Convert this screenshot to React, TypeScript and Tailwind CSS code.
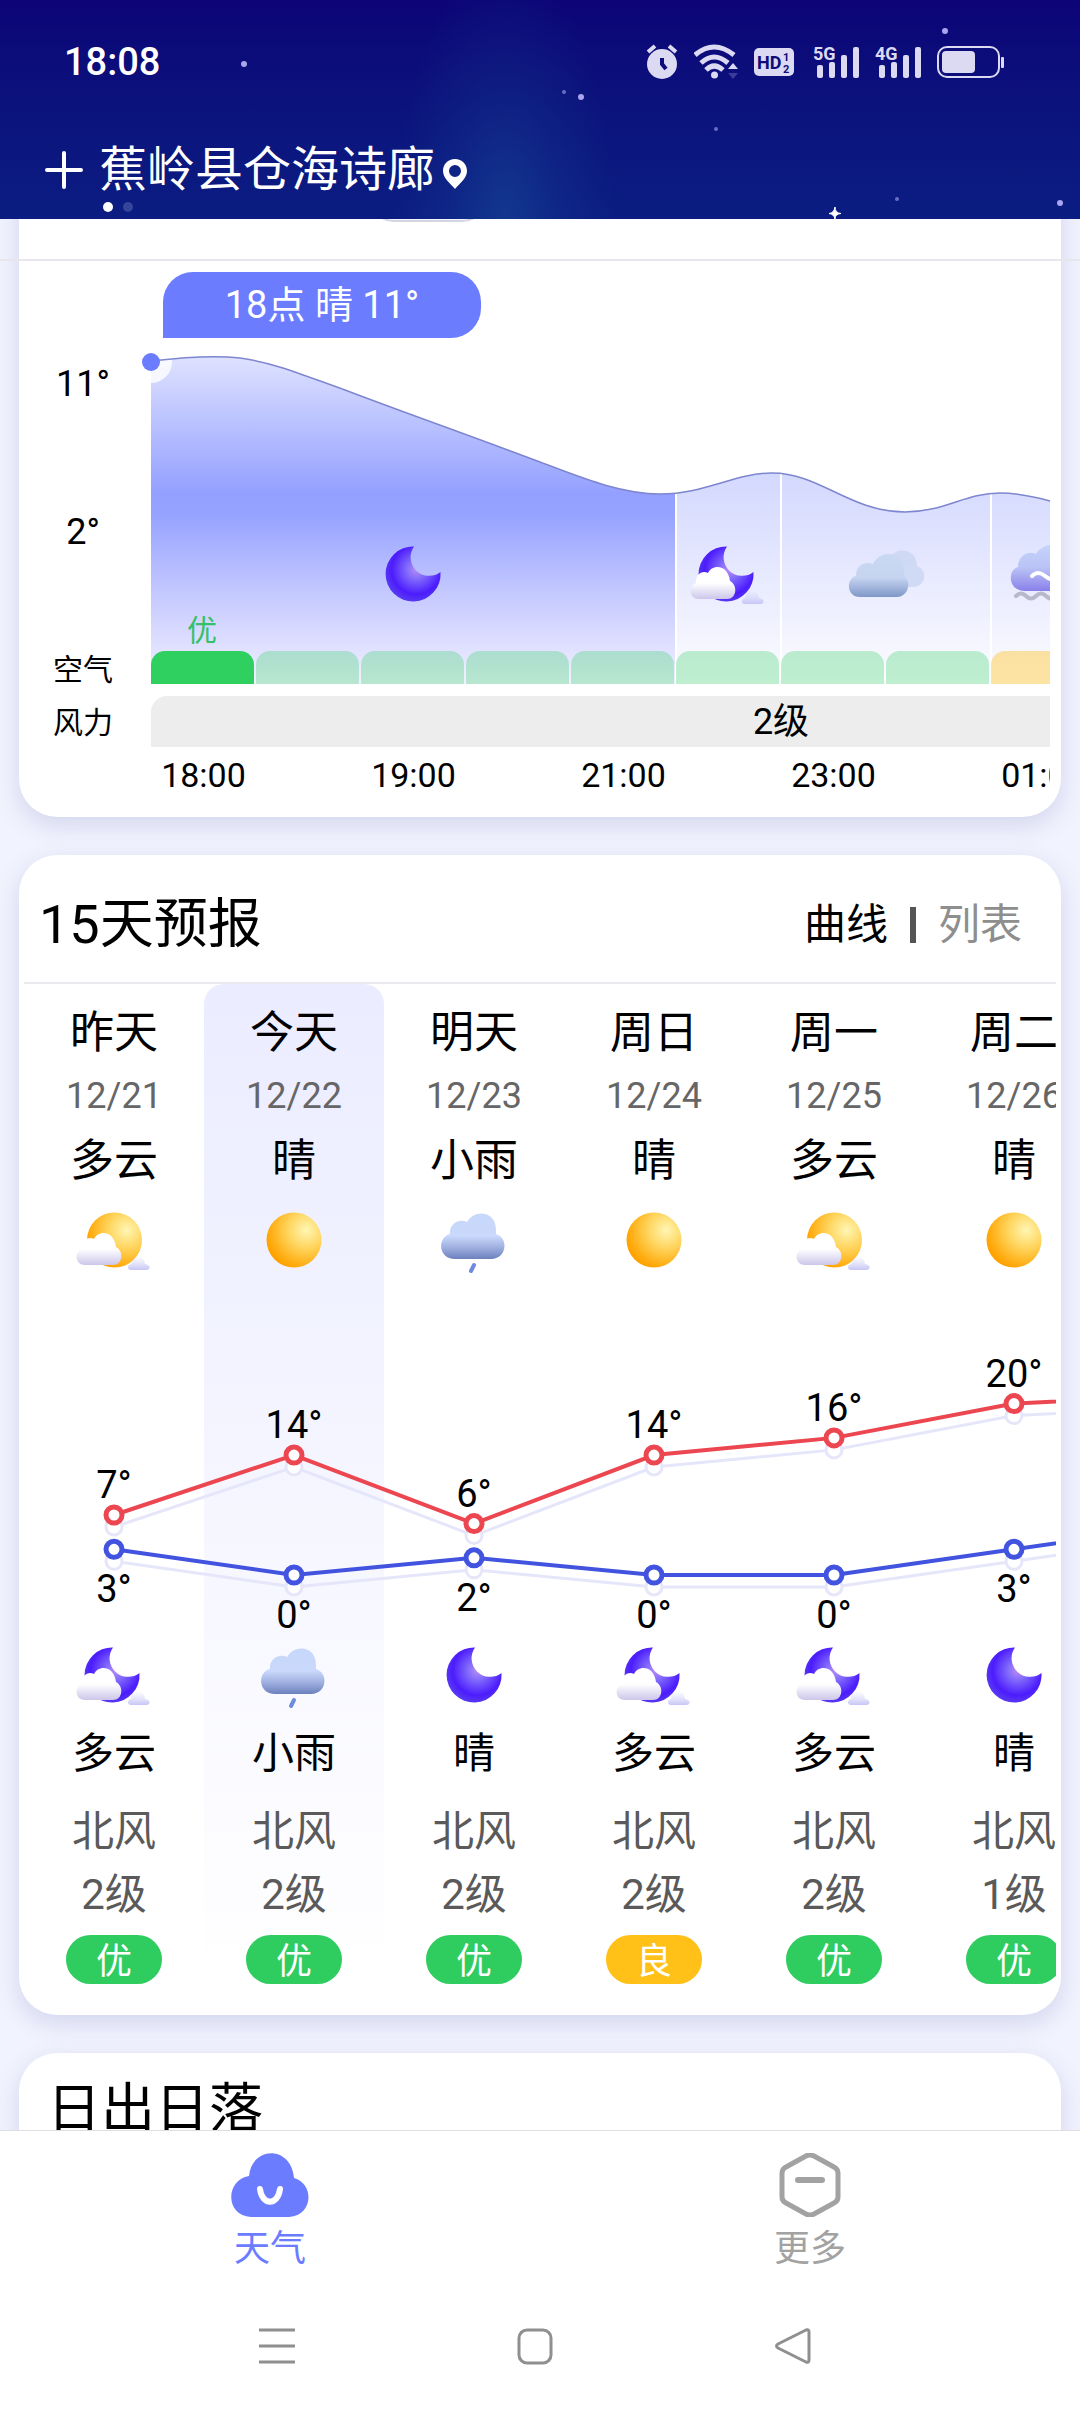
import { useState } from "react";

type IconName = "sun" | "sunCloud" | "moon" | "moonCloud" | "rain" | "cloudy" | "fog";

const days = [
  { name: "昨天", date: "12/21", day: "多云", dayIcon: "sunCloud", high: 7, low: 3, night: "多云", nightIcon: "moonCloud", wind: "北风", level: "2级", air: "优" },
  { name: "今天", date: "12/22", day: "晴", dayIcon: "sun", high: 14, low: 0, night: "小雨", nightIcon: "rain", wind: "北风", level: "2级", air: "优" },
  { name: "明天", date: "12/23", day: "小雨", dayIcon: "rain", high: 6, low: 2, night: "晴", nightIcon: "moon", wind: "北风", level: "2级", air: "优" },
  { name: "周日", date: "12/24", day: "晴", dayIcon: "sun", high: 14, low: 0, night: "多云", nightIcon: "moonCloud", wind: "北风", level: "2级", air: "良" },
  { name: "周一", date: "12/25", day: "多云", dayIcon: "sunCloud", high: 16, low: 0, night: "多云", nightIcon: "moonCloud", wind: "北风", level: "2级", air: "优" },
  { name: "周二", date: "12/26", day: "晴", dayIcon: "sun", high: 20, low: 3, night: "晴", nightIcon: "moon", wind: "北风", level: "1级", air: "优" },
];

// the lines run on towards the next, not yet scrolled-in day
const highs = [...days.map((d) => d.high), 21];
const lows = [...days.map((d) => d.low), 6];

const hours = ["18:00", "19:00", "21:00", "23:00", "01:00"];
const airBars = ["now", "good", "good", "good", "good", "good", "good", "good", "fair", "fair", "fair", "fair"];

const curve =
  "M0 23 C34 19 64 17 89 20 C124 25 149 36 194 52 C249 73 309 94 389 124 C429 139 469 156 509 156 C554 156 584 135 621 135 C669 135 699 174 754 174 C794 174 814 155 849 155 C867 155 884 159 899 163 C960 180 1000 190 1050 180 C1120 168 1190 170 1260 176";

// shared gradients, referenced by id from every icon
function Gradients() {
  return (
    <svg className="absolute w-0 h-0" aria-hidden="true">
      <defs>
        <radialGradient id="g-sun" cx="0.72" cy="0.32" r="0.75">
          <stop offset="0" stopColor="#fff6b4" />
          <stop offset="0.45" stopColor="#ffd45c" />
          <stop offset="0.85" stopColor="#ffae14" />
          <stop offset="1" stopColor="#ffa200" />
        </radialGradient>
        <radialGradient id="g-moon" cx="0.56" cy="0.42" r="0.6">
          <stop offset="0" stopColor="#b98cf5" />
          <stop offset="0.3" stopColor="#8069fb" />
          <stop offset="0.75" stopColor="#4c1cfd" />
          <stop offset="1" stopColor="#5a3cf0" />
        </radialGradient>
        <linearGradient id="g-white" x1="0" y1="0" x2="0" y2="1">
          <stop offset="0.5" stopColor="#ffffff" />
          <stop offset="1" stopColor="#cdc6ea" />
        </linearGradient>
        <linearGradient id="g-puff" x1="0" y1="0" x2="0" y2="1">
          <stop offset="0" stopColor="#d8d8fa" stopOpacity="0.1" />
          <stop offset="1" stopColor="#c6c5f5" />
        </linearGradient>
        <linearGradient id="g-rain" gradientUnits="userSpaceOnUse" x1="0" y1="5" x2="0" y2="51">
          <stop offset="0" stopColor="#c6d8fb" />
          <stop offset="0.5" stopColor="#c9d8fb" />
          <stop offset="0.75" stopColor="#9fb0e0" />
          <stop offset="1" stopColor="#6c80bd" />
        </linearGradient>
        <linearGradient id="g-cloudy" gradientUnits="userSpaceOnUse" x1="0" y1="12" x2="0" y2="55">
          <stop offset="0" stopColor="#c9d8f3" />
          <stop offset="0.55" stopColor="#c6d4f0" />
          <stop offset="1" stopColor="#7f97c8" />
        </linearGradient>
        <linearGradient id="g-fog" gradientUnits="userSpaceOnUse" x1="0" y1="2" x2="0" y2="49">
          <stop offset="0" stopColor="#c6d4fa" />
          <stop offset="0.5" stopColor="#bac3f5" />
          <stop offset="1" stopColor="#8a80ea" />
        </linearGradient>
      </defs>
    </svg>
  );
}

const moonPath = "M41 4.5 A27.5 27.5 0 1 0 67.5 30 A18.6 18.6 0 0 1 41 4.5 Z";

function SmallClouds() {
  return (
    <>
      <path d="M11 57 C1 57 0 44 8 41 C7 33 14 28 20 31 C24 22 40 22 42 39 C50 43 49 57 39 57 Z" fill="url(#g-white)" />
      <path d="M57 62 C53 62 53 57 57 56 C58 47 70 46 71 56 C77 57 77 62 72 62 Z" fill="url(#g-puff)" />
    </>
  );
}

function WeatherIcon({ name, x, y }: { name: IconName; x?: number; y?: number }) {
  return (
    <svg x={x} y={y} width="80" height="64" viewBox="0 0 80 64" className="overflow-visible shrink-0" aria-hidden="true">
      {name === "sun" && <circle cx="40" cy="32" r="27.5" fill="url(#g-sun)" />}
      {name === "moon" && <path d={moonPath} fill="url(#g-moon)" />}
      {name === "sunCloud" && (
        <>
          <circle cx="40.5" cy="32" r="27.5" fill="url(#g-sun)" />
          <SmallClouds />
        </>
      )}
      {name === "moonCloud" && (
        <>
          <path d={moonPath} fill="url(#g-moon)" transform="translate(-2 0)" />
          <SmallClouds />
        </>
      )}
      {name === "rain" && (
        <>
          <path d="M21 51 C4 51 3 29 16 26 C15 16 25 10 33 14 C40 1 62 2 62 22 L62 26 C75 30 73 51 57 51 Z" fill="url(#g-rain)" />
          <path d="M40 57 L37 63" stroke="#6f8bdc" strokeWidth="4" strokeLinecap="round" />
        </>
      )}
      {name === "cloudy" && (
        <>
          <path d="M44 16 C50 4 71 6 71 24 C83 29 79 45 67 45 L44 45 Z" fill="#c9d6f1" opacity="0.8" />
          <path d="M14 55 C0 55 0 36 10 34 C10 23 19 19 27 22 C34 7 58 8 58 32 L59 35 C66 42 61 55 51 55 Z" fill="url(#g-cloudy)" />
        </>
      )}
      {name === "fog" && (
        <>
          <path d="M17 49 C0 49 -1 28 10 25 C10 13 21 8 28 12 C36 -2 60 0 60 20 C76 22 78 49 58 49 Z" fill="url(#g-fog)" />
          <path d="M24 34 q6 -6 13 0 t13 0 t13 0 t13 0" fill="none" stroke="#fff" strokeWidth="4" strokeLinecap="round" />
          <path d="M8 54 q5 -5 10 0 t10 0 t10 0 t10 0 t10 0 t10 0" fill="none" stroke="#b9b9cc" strokeWidth="4" strokeLinecap="round" />
        </>
      )}
    </svg>
  );
}

function Signal({ label }: { label: string }) {
  return (
    <svg width="46" height="34" viewBox="0 0 46 34" fill="#dcd9f3" className="overflow-visible" aria-label={label}>
      <text x="0" y="15" fontSize="18" fontWeight="700">{label}</text>
      <rect x="4" y="20" width="6" height="13" rx="2" />
      <rect x="16" y="17" width="6" height="16" rx="2" />
      <rect x="28" y="10" width="6" height="23" rx="2" />
      <rect x="40" y="2" width="6" height="31" rx="2" />
    </svg>
  );
}

function StatusBar() {
  return (
    <div className="flex items-center justify-between h-12 pl-[64px] pr-[76px]">
      <span className="text-[38px] leading-[48px] font-medium">18:08</span>
      <div className="flex items-center gap-4">
        <svg width="32" height="36" viewBox="0 0 32 36">
          <circle cx="16" cy="20" r="15" fill="#dcd9f3" />
          <path d="M2 8 L9 2 M30 8 L23 2" stroke="#dcd9f3" strokeWidth="4" />
          <path d="M16 14 V20 L20 25" fill="none" stroke="#0d0c78" strokeWidth="4" />
        </svg>
        <svg width="44" height="36" viewBox="0 0 44 36" fill="none" stroke="#dcd9f3" strokeWidth="5">
          <path d="M1 11 Q20 -5 40 11" />
          <path d="M7 19 Q20 7 34 19" />
          <path d="M12 26 Q20 18 29 26" />
          <circle cx="20.5" cy="31" r="3.5" fill="#dcd9f3" stroke="none" />
          <path d="M34 25 L39 19 L44 25 Z" fill="#dcd9f3" stroke="none" />
          <path d="M34 29 L39 35 L44 29 Z" fill="#3d3a9c" stroke="none" />
        </svg>
        <svg width="43" height="28" viewBox="0 0 43 28">
          <rect width="40" height="28" rx="5" fill="#dcd9f3" />
          <g fill="#0d0c78" fontWeight="700">
            <text x="3" y="21" fontSize="18">HD</text>
            <text x="29" y="13" fontSize="11">1</text>
            <text x="29" y="25" fontSize="11">2</text>
          </g>
        </svg>
        <Signal label="5G" />
        <Signal label="4G" />
        <svg width="67" height="32" viewBox="0 0 67 32">
          <rect x="1" y="1" width="61" height="30" rx="9" fill="none" stroke="#dcd9f3" strokeWidth="2" />
          <rect x="5" y="5" width="33" height="22" rx="4" fill="#dcd9f3" />
          <rect x="64" y="11" width="3" height="11" rx="1" fill="#dcd9f3" />
        </svg>
      </div>
    </div>
  );
}

function Stars() {
  return (
    <svg className="absolute inset-0 w-full h-full" aria-hidden="true">
      <g fill="#a9a6ee">
        <circle cx="244" cy="64" r="3" />
        <circle cx="945" cy="31" r="3" />
        <circle cx="581" cy="97" r="3" />
        <circle cx="564" cy="92" r="2" opacity="0.6" />
        <circle cx="716" cy="129" r="2" opacity="0.6" />
        <circle cx="897" cy="199" r="2" opacity="0.6" />
        <circle cx="1060" cy="203" r="3" />
      </g>
      <path d="M835 207 Q835 213 841 213.5 Q835 214 835 219 Q834 214 829 213.5 Q834 213 835 207 Z" fill="#fff" stroke="#fff" />
    </svg>
  );
}

function Header() {
  return (
    <header className="relative shrink-0 overflow-hidden text-white bg-linear-to-b from-[#0c0477] to-[#0b1d82] pt-[38px] pb-[7px]">
      <div className="absolute inset-0 bg-[radial-gradient(ellipse_110px_260px_at_505px_220px,rgba(26,80,155,0.5),rgba(26,80,155,0.2)_50%,transparent)]" />
      <Stars />
      <div className="relative">
        <StatusBar />
        <div className="flex items-center gap-4 mt-[54px] pl-[45px]">
          <button aria-label="添加城市">
            <svg width="38" height="38" viewBox="0 0 38 38" stroke="#fff" strokeWidth="4" strokeLinecap="round">
              <path d="M19 2 V36 M2 19 H36" />
            </svg>
          </button>
          <h1 className="flex items-center gap-2 text-[48px] leading-[60px]">
            蕉岭县仓海诗廊
            <svg width="24" height="30" viewBox="0 0 24 30" className="mt-2">
              <path fillRule="evenodd" fill="#fff" d="M12 0 C19 0 24 5 24 12 C24 19 17 24 12 30 C7 24 0 19 0 12 C0 5 5 0 12 0 Z M12 6 A6 6 0 1 0 12 18 A6 6 0 1 0 12 6 Z" />
            </svg>
          </h1>
        </div>
        <div className="flex gap-[10px] mt-[2px] pl-[103px]">
          <span className="size-[10px] rounded-full bg-white" />
          <span className="size-[10px] rounded-full bg-[#34459a]" />
        </div>
      </div>
    </header>
  );
}

function HourlyChart() {
  return (
    <svg width="1260" height="346" viewBox="0 0 1260 346" className="block">
      <defs>
        <linearGradient id="area-now" gradientUnits="userSpaceOnUse" x1="0" y1="18" x2="0" y2="346">
          <stop offset="0" stopColor="#dfe2ff" />
          <stop offset="0.42" stopColor="#93a0ff" />
          <stop offset="0.48" stopColor="#95a2ff" />
          <stop offset="0.7" stopColor="#c0c5ff" />
          <stop offset="1" stopColor="#f3f1ff" />
        </linearGradient>
        <linearGradient id="area-next" gradientUnits="userSpaceOnUse" x1="0" y1="135" x2="0" y2="346">
          <stop offset="0" stopColor="#d3d8fe" />
          <stop offset="1" stopColor="#fdfcff" />
        </linearGradient>
        <clipPath id="area-clip">
          <path d={`${curve} L1260 346 L0 346 Z`} />
        </clipPath>
      </defs>
      <g clipPath="url(#area-clip)">
        <rect width="525" height="346" fill="url(#area-now)" />
        <rect x="525" width="735" height="346" fill="url(#area-next)" />
        <path d="M525 0 V346 M630 0 V346 M840 0 V346" stroke="#fff" strokeWidth="2" />
        <circle cx="0" cy="24" r="21" fill="#fff" opacity="0.8" />
      </g>
      <path d={curve} fill="none" stroke="#7d86cf" strokeWidth="1.5" />
      <WeatherIcon name="moon" x={222} y={204} />
      <WeatherIcon name="moonCloud" x={537} y={204} />
      <WeatherIcon name="cloudy" x={695} y={204} />
      <WeatherIcon name="fog" x={857} y={204} />
      <text x="51" y="303" fontSize="30" textAnchor="middle" fill="#37c069">优</text>
    </svg>
  );
}

function HourlyCard() {
  return (
    <section className="bg-white rounded-[38px] shadow-[0_8px_24px_rgba(80,80,160,0.18)] pb-[22px]">
      <div className="flex items-center h-[126px] pl-[20px]">
        <h2 className="text-[54px] leading-[60px]">24小时预报</h2>
        <span className="w-[120px] h-[52px] ml-[52px] rounded-full border-2 border-[#d3d5e0] bg-[#f3f4fb]" />
      </div>
      <div className="-mx-[19px] h-[2px] bg-[#e6e6ec]" />
      <div className="flex items-center justify-center w-[318px] h-[66px] mt-[11px] ml-[144px] rounded-[30px] rounded-bl-none bg-[#6b7cff] text-white text-[38px] leading-[48px]">
        18点 晴 11°
      </div>
      <div className="flex pr-[11px]">
        <div className="flex flex-col items-center w-[132px] shrink-0 pr-1 leading-[40px]">
          <span className="mt-[26px] text-[36px]">11°</span>
          <span className="mt-[108px] text-[36px]">2°</span>
          <span className="mt-[98px] text-[30px]">空气</span>
          <span className="mt-[13px] text-[30px]">风力</span>
        </div>
        <div className="relative flex-1 min-w-0">
          <div className="overflow-hidden">
            <div className="w-[1260px]">
              <div className="relative">
                <HourlyChart />
                <div className="absolute inset-x-0 bottom-0 flex h-[33px]">
                  {airBars.map((bar, i) => (
                    <div key={i} className="w-[105px] pr-[2px]">
                      <div
                        className={
                          bar === "now"
                            ? "h-full rounded-t-[14px] bg-[#2fcf60]"
                            : bar === "good"
                              ? "h-full rounded-t-[14px] bg-[#2fcf60]/30"
                              : "h-full rounded-t-[14px] bg-[#ffc118]/40"
                        }
                      />
                    </div>
                  ))}
                </div>
              </div>
              <div className="mt-3 h-[51px] rounded-tl-[16px] bg-[#ededed] text-center text-[36px] leading-[52px]">2级</div>
              <div className="flex mt-2">
                {hours.map((hour) => (
                  <div key={hour} className="w-[210px]">
                    <div className="w-[105px] text-center text-[34px] leading-[40px]">{hour}</div>
                  </div>
                ))}
              </div>
            </div>
          </div>
          <span className="absolute top-[15px] -left-[9px] size-[18px] rounded-full bg-[#6b7cff]" />
        </div>
      </div>
    </section>
  );
}

const lineX = (i: number) => 90 + i * 180;
const lineY = (t: number) => 303 - t * 8.57;

function TemperatureLine({ values, color }: { values: number[]; color: string }) {
  const points = values.map((t, i) => `${lineX(i)},${lineY(t)}`).join(" ");
  return (
    <>
      <g transform="translate(0 12)" stroke="#e6e6fb" strokeWidth="3" fill="none">
        <polyline points={points} />
        {values.map((t, i) => (
          <circle key={i} cx={lineX(i)} cy={lineY(t)} r="8" fill="#fff" />
        ))}
      </g>
      <g stroke={color} strokeWidth="4" fill="none">
        <polyline points={points} />
        {values.map((t, i) => (
          <circle key={i} cx={lineX(i)} cy={lineY(t)} r="8" strokeWidth="5" fill="#fff" />
        ))}
      </g>
    </>
  );
}

function ForecastCard() {
  const [view, setView] = useState("curve");
  return (
    <section className="bg-white rounded-[38px] shadow-[0_8px_24px_rgba(80,80,160,0.18)] mt-[38px] px-[5px] pb-[31px]">
      <div className="flex items-center justify-between h-[127px] pt-[13px] pl-[15px] pr-[34px]">
        <h2 className="text-[54px] leading-[60px]">15天预报</h2>
        <div className="flex items-center gap-[22px] text-[42px] leading-[60px]">
          <button onClick={() => setView("curve")} className={view === "curve" ? "text-black" : "text-[#8e8e8e]"}>
            曲线
          </button>
          <span className="w-[6px] h-[36px] bg-[#555]" />
          <button onClick={() => setView("list")} className={view === "list" ? "text-black" : "text-[#8e8e8e]"}>
            列表
          </button>
        </div>
      </div>
      <div className="h-[2px] bg-[#e9eaee]" />
      <div className="overflow-hidden">
        <div className="relative flex w-[1260px]">
          {days.map((d) => (
            <div
              key={d.date}
              className={
                d.name === "今天"
                  ? "flex flex-col items-center w-[180px] pt-[19px] rounded-t-[20px] bg-linear-to-b from-[#ebecff] to-white"
                  : "flex flex-col items-center w-[180px] pt-[19px]"
              }
            >
              <span className="text-[44px] leading-[60px]">{d.name}</span>
              <span className="mt-[11px] text-[36px] leading-[44px] text-[#666]">{d.date}</span>
              <span className="mt-[13px] mb-[17px] text-[44px] leading-[60px]">{d.day}</span>
              <WeatherIcon name={d.dayIcon as IconName} />
              <div className="h-[371px]" />
              <WeatherIcon name={d.nightIcon as IconName} />
              <span className="mt-[17px] text-[42px] leading-[60px]">{d.night}</span>
              <span className="mt-[18px] text-[42px] leading-[60px] text-[#5a5a5a]">{d.wind}</span>
              <span className="mt-[3px] text-[42px] leading-[60px] text-[#5a5a5a]">{d.level}</span>
              <span
                className={
                  d.air === "良"
                    ? "w-[96px] h-[49px] mt-[10px] rounded-full bg-[#ffc118] text-white text-center text-[36px] leading-[54px]"
                    : "w-[96px] h-[49px] mt-[10px] rounded-full bg-[#2fcc5f] text-white text-center text-[36px] leading-[54px]"
                }
              >
                {d.air}
              </span>
            </div>
          ))}
          <svg width="1260" height="371" viewBox="0 0 1260 371" className="absolute left-0 top-[288px]">
            <TemperatureLine values={highs} color="#ec4750" />
            <TemperatureLine values={lows} color="#4254df" />
            <g fontSize="38" textAnchor="middle" fill="#000">
              {days.map((d, i) => (
                <g key={d.date}>
                  <text x={lineX(i)} y={lineY(d.high) - 17}>{d.high}°</text>
                  <text x={lineX(i)} y={lineY(d.low) + 53}>{d.low}°</text>
                </g>
              ))}
            </g>
          </svg>
        </div>
      </div>
    </section>
  );
}

function TabBar() {
  return (
    <nav className="flex pt-[22px] text-[36px] leading-[40px]">
      <button className="flex flex-1 flex-col items-center gap-3 text-[#6b7cff]">
        <svg width="78" height="64" viewBox="0 0 78 64">
          <path d="M20 64 C-6 63 -6 27 18 23 C21 -7 60 -8 63 25 C84 31 82 63 58 64 Z" fill="currentColor" />
          <path d="M29 36 C31 53 47 53 49 36" fill="none" stroke="#fff" strokeWidth="6" strokeLinecap="round" />
        </svg>
        天气
      </button>
      <button className="flex flex-1 flex-col items-center gap-3 text-[#a2a2a2]">
        <svg width="64" height="64" viewBox="0 0 64 64" fill="none" stroke="currentColor" strokeWidth="5" strokeLinejoin="round" strokeLinecap="round">
          <path d="M28 3 Q32 1 36 3 L56 14 Q60 16 60 20 V44 Q60 48 56 50 L36 61 Q32 63 28 61 L8 50 Q4 48 4 44 V20 Q4 16 8 14 Z" />
          <path d="M20 27 H44" strokeWidth="6" />
        </svg>
        更多
      </button>
    </nav>
  );
}

function SystemNav() {
  return (
    <div className="flex items-center justify-center gap-[222px] h-[96px] mt-[29px] mb-[18px] pr-[10px]">
      <button aria-label="最近任务">
        <svg width="36" height="38" viewBox="0 0 36 38" stroke="#8f8f8f" strokeWidth="3">
          <path d="M0 3 H36 M0 19 H36 M0 35 H36" />
        </svg>
      </button>
      <button aria-label="主页">
        <svg width="36" height="38" viewBox="0 0 36 38" fill="none" stroke="#8f8f8f" strokeWidth="3">
          <rect x="2" y="3" width="32" height="33" rx="8" />
        </svg>
      </button>
      <button aria-label="返回">
        <svg width="36" height="38" viewBox="0 0 36 38" fill="none" stroke="#8f8f8f" strokeWidth="3" strokeLinejoin="round">
          <path d="M31 3 Q34 2 34 5 V33 Q34 36 31 35 L3 21 Q0 19 3 17 Z" />
        </svg>
      </button>
    </div>
  );
}

export default function App() {
  return (
    <div className="flex flex-col h-screen bg-[#f1f3fe] text-black font-['Roboto','Noto_Sans_CJK_SC',sans-serif]">
      <Gradients />
      <Header />
      <main className="flex-1 min-h-0 overflow-hidden">
        <div className="-mt-[86px] px-[19px]">
          <HourlyCard />
          <ForecastCard />
          <section className="bg-white rounded-[38px] shadow-[0_8px_24px_rgba(80,80,160,0.18)] mt-[38px] pt-[27px] pb-[200px] pl-[28px]">
            <h2 className="text-[54px] leading-[60px]">日出日落</h2>
          </section>
        </div>
      </main>
      <footer className="shrink-0 bg-white border-t border-[#dedee4]">
        <TabBar />
        <SystemNav />
      </footer>
    </div>
  );
}
